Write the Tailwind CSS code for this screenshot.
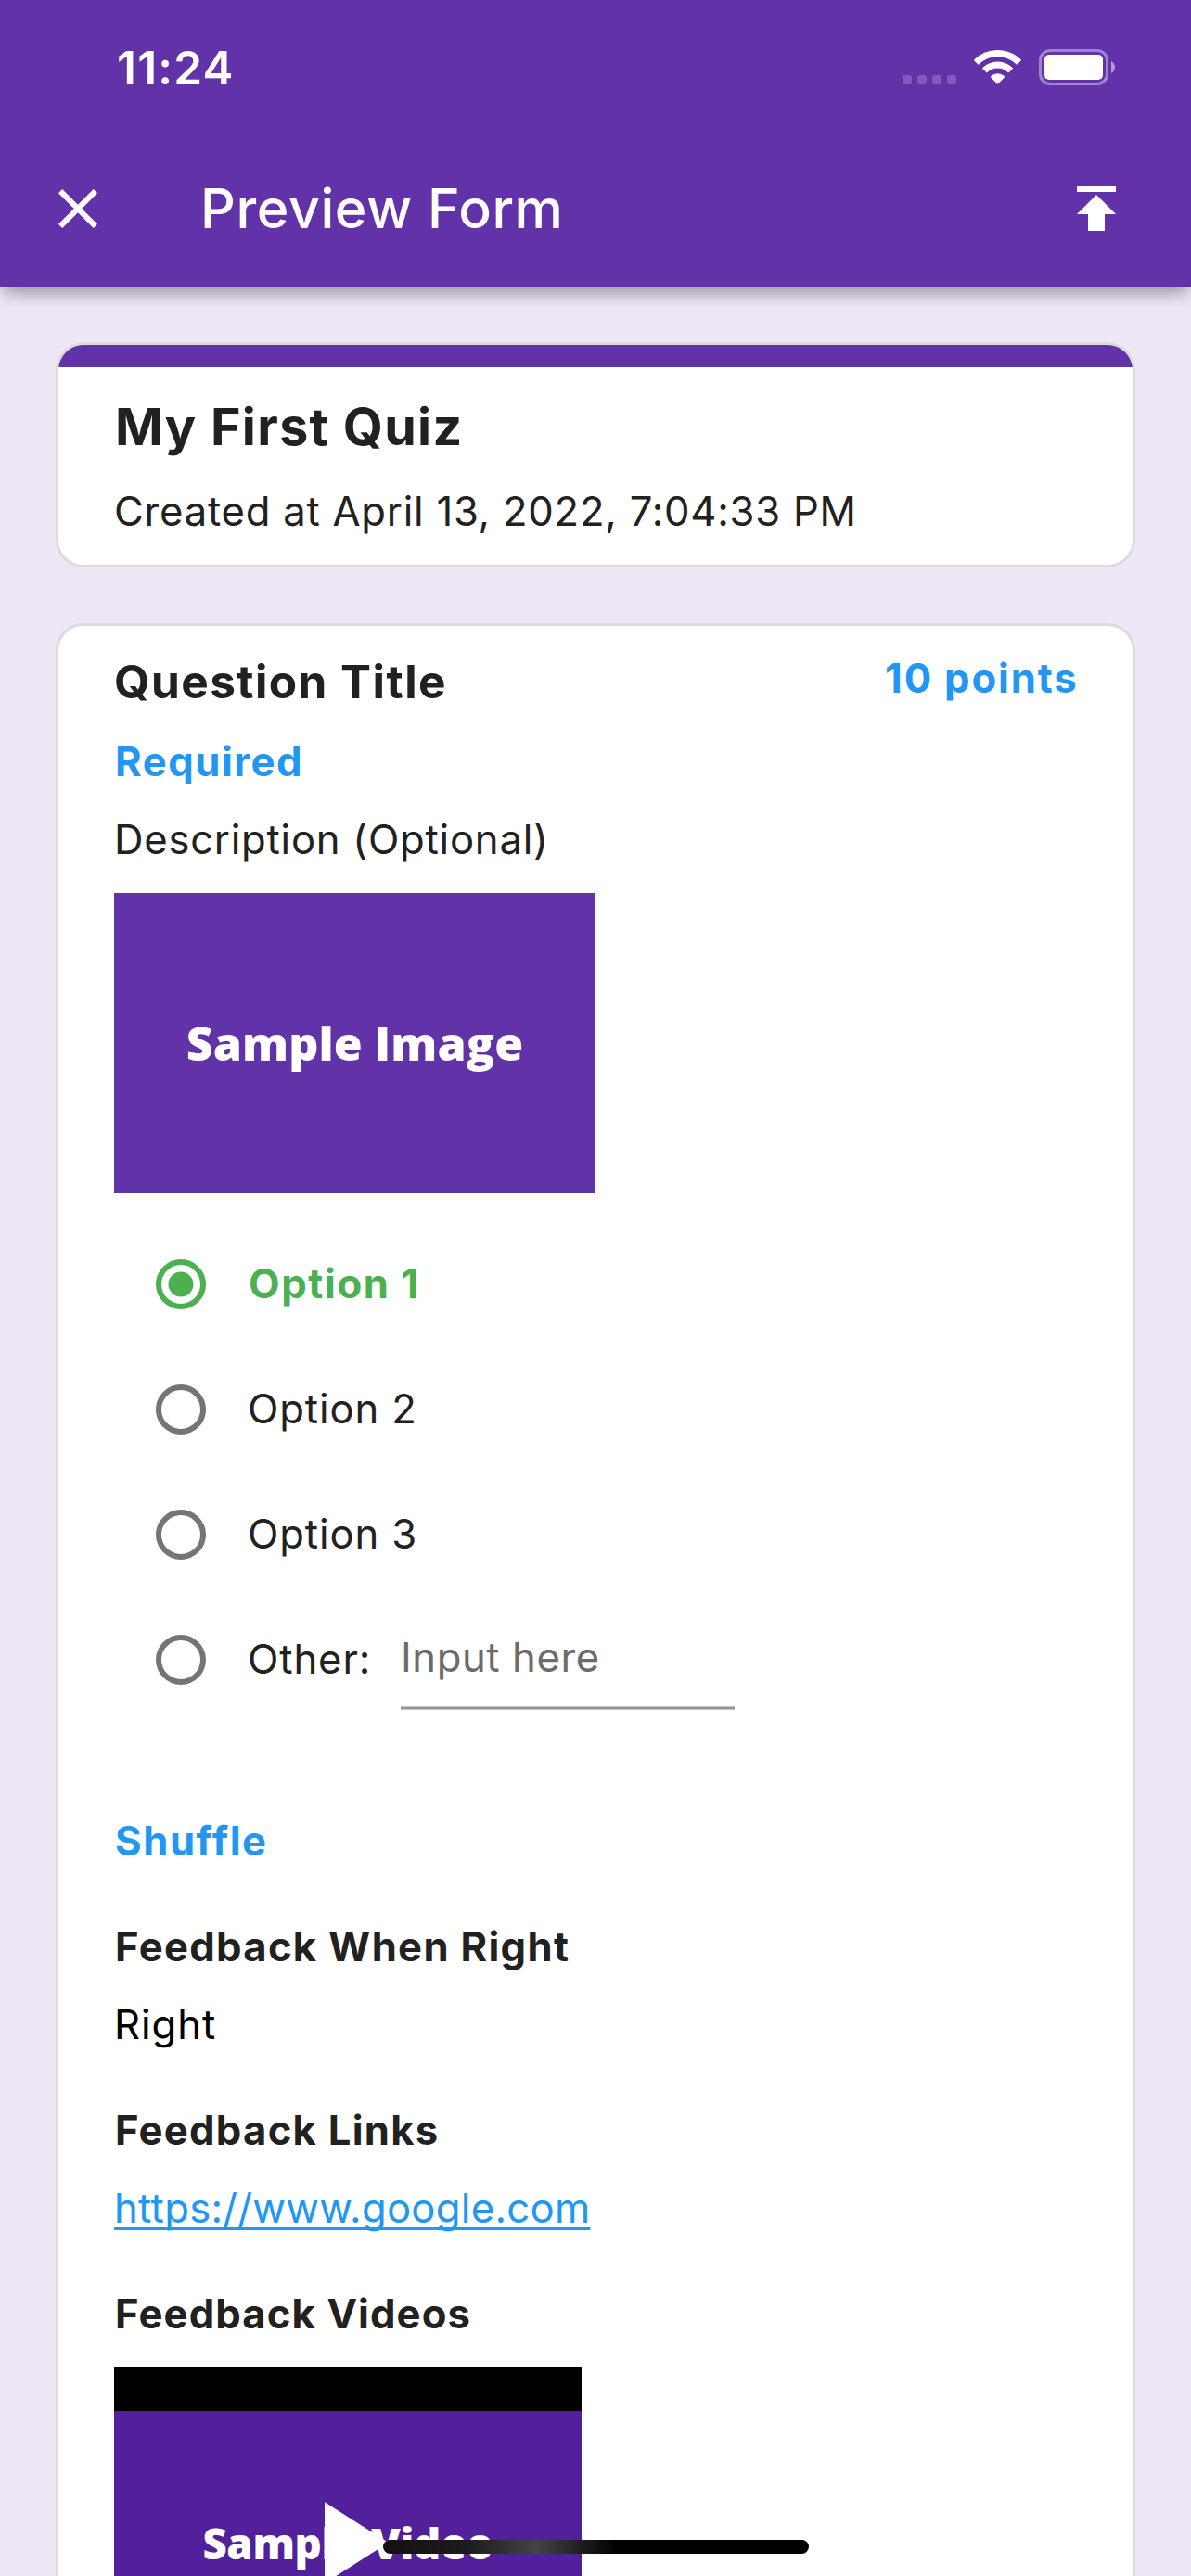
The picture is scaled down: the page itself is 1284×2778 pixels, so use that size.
<!DOCTYPE html>
<html lang="en">
<head>
<meta charset="utf-8">
<title>Preview Form</title>
<script src="https://cdn.jsdelivr.net/npm/@tailwindcss/browser@4"></script>
</head>
<body class="relative h-[2778px] w-[1284px] overflow-hidden bg-[#eee8f6] font-['Inter',sans-serif] text-[#212121]">
  <div class="flex h-full flex-col overflow-hidden">
    <header class="relative z-10 h-[309px] shrink-0 bg-[#6233a8] text-white shadow-[0_9px_18px_-3px_rgba(0,0,0,0.4)]">
      <!-- status bar -->
      <div class="flex h-[141px] items-start justify-between pl-[126px] pr-[82px]">
        <div class="mt-[43px] text-[49.5px] leading-[60px] font-semibold tracking-[1.2px]">11:24</div>
        <div class="mt-[53px] flex items-start">
          <div class="mt-[28px] flex gap-[6px]">
            <span class="h-[10px] w-[10px] rounded-[3px] bg-white/20"></span>
            <span class="h-[10px] w-[10px] rounded-[3px] bg-white/20"></span>
            <span class="h-[10px] w-[10px] rounded-[3px] bg-white/20"></span>
            <span class="h-[10px] w-[10px] rounded-[3px] bg-white/20"></span>
          </div>
          <svg class="ml-[19px] mt-[1px] h-[37px] w-[51px]" viewBox="0 0 51 37" fill="white">
            <path d="M25.5 0C35 0 44 3.7 50.600 10.200Q51.200 10.900 50.600 11.500L46.900 15.200Q46.200 15.800 45.500 15.200A28.700 28.700 0 0 0 5.500 15.200Q4.800 15.800 4.100 15.200L.4 11.500Q-.2 10.900 .4 10.200A35.800 35.800 0 0 1 25.500 0Z"/>
            <path d="M25.500 12.500A23.200 23.200 0 0 1 41.600 19Q42.200 19.700 41.600 20.300L37.800 24Q37.100 24.600 36.500 24A16 16 0 0 0 14.500 24Q13.900 24.600 13.200 24L9.400 20.300Q8.800 19.700 9.400 19A23.200 23.200 0 0 1 25.500 12.500Z"/>
            <path d="M25.500 25.200A10.800 10.800 0 0 1 32.800 28.100Q33.400 28.800 32.800 29.400L26.200 36.200Q25.500 36.900 24.800 36.200L18.200 29.400Q17.600 28.800 18.200 28.100A10.800 10.800 0 0 1 25.500 25.200Z"/>
          </svg>
          <svg class="ml-[19px] h-[39px] w-[82px]" viewBox="0 0 82 39">
            <rect x="1.500" y="1.500" width="72" height="36" rx="10.500" fill="none" stroke="white" stroke-opacity=".4" stroke-width="3"/>
            <rect x="6" y="6" width="63" height="27" rx="5" fill="white"/>
            <path d="M78 13Q82 15.500 82 19.500T78 26Z" fill="white" fill-opacity=".5"/>
          </svg>
        </div>
      </div>
      <!-- app bar -->
      <div class="flex h-[168px] items-center pl-12 pr-[66px]">
        <svg class="h-[72px] w-[72px]" viewBox="0 0 24 24" fill="white"><path d="M19 6.410L17.590 5 12 10.590 6.410 5 5 6.410 10.590 12 5 17.590 6.410 19 12 13.410 17.590 19 19 17.590 13.410 12z"/></svg>
        <h1 class="ml-[96px] grow text-[59px] leading-[72px] font-medium tracking-[0.6px]">Preview Form</h1>
        <svg class="h-[72px] w-[72px]" viewBox="0 0 24 24" fill="white"><path d="M5 4v2h14V4H5zm0 10h4v6h6v-6h4l-7-7-7 7z"/></svg>
      </div>
    </header>

    <main class="flex min-h-0 grow flex-col gap-[60px] overflow-hidden px-[60px] pt-[60px]">
      <section class="h-[243px] shrink-0 overflow-hidden rounded-[30px] border-[3px] border-[#dcdcdc] bg-white">
        <div class="h-6 bg-[#6233a8]"></div>
        <div class="px-[60px] pt-[31px]">
          <h2 class="pl-px text-[55.5px] leading-[66px] font-bold tracking-[1.35px]">My First Quiz</h2>
          <p class="mt-[31px] text-[43.6px] leading-[56px] tracking-[0.77px]">Created at April 13, 2022, 7:04:33 PM</p>
        </div>
      </section>

      <section class="h-[2300px] shrink-0 rounded-[30px] border-[3px] border-[#dcdcdc] bg-white px-[60px] pt-[30px] text-[43.6px] leading-[56px]">
        <div class="flex h-[60px] items-start justify-between whitespace-nowrap">
          <h3 class="text-[49.5px] leading-[60px] font-bold tracking-[1.46px]">Question Title</h3>
          <span class="-mt-px w-[207px] font-bold tracking-[1.85px] text-[#2196f3]">10 points</span>
        </div>
        <p class="mt-[29px] pl-px font-bold tracking-[1.55px] text-[#2196f3]">Required</p>
        <p class="mt-[28px] tracking-[0.77px]">Description (Optional)</p>

        <div class="mt-[29px] flex h-[324px] w-[519px] items-center justify-center bg-[#6233a8] font-['Open_Sans',sans-serif] text-[50px] leading-[68px] font-extrabold tracking-[0.12px] text-white">Sample Image</div>

        <ul class="mt-[30px] tracking-[0.9px]">
          <li class="flex h-[135px] items-center pl-[45px]">
            <svg class="h-[54px] w-[54px]" viewBox="0 0 54 54"><circle cx="27" cy="27" r="24" fill="none" stroke="#4caf50" stroke-width="6"/><circle cx="27" cy="27" r="13.500" fill="#4caf50"/></svg>
            <span class="ml-[46px] font-bold tracking-[1.65px] text-[#4caf50]">Option 1</span>
          </li>
          <li class="flex h-[135px] items-center pl-[45px]">
            <svg class="h-[54px] w-[54px]" viewBox="0 0 54 54"><circle cx="27" cy="27" r="24" fill="none" stroke="#757575" stroke-width="6"/></svg>
            <span class="ml-[45px]">Option 2</span>
          </li>
          <li class="flex h-[135px] items-center pl-[45px]">
            <svg class="h-[54px] w-[54px]" viewBox="0 0 54 54"><circle cx="27" cy="27" r="24" fill="none" stroke="#757575" stroke-width="6"/></svg>
            <span class="ml-[45px]">Option 3</span>
          </li>
          <li class="flex h-[135px] items-center pl-[45px]">
            <svg class="h-[54px] w-[54px]" viewBox="0 0 54 54"><circle cx="27" cy="27" r="24" fill="none" stroke="#757575" stroke-width="6"/></svg>
            <span class="ml-[45px] w-[165px]">Other:</span>
            <div class="mt-[38px] w-[360px] self-start">
              <span class="block tracking-[0.6px] text-[#6b6b6b]">Input here</span>
              <div class="mt-[24px] h-1 border-y border-[#c4c4c4] bg-[#949494]"></div>
            </div>
          </li>
        </ul>

        <p class="mt-[101px] pl-px font-bold tracking-[1.6px] text-[#2196f3]">Shuffle</p>

        <h4 class="mt-[58px] pl-px font-bold tracking-[1.32px]">Feedback When Right</h4>
        <p class="mt-[28px] tracking-[0.97px] text-black">Right</p>

        <h4 class="mt-[58px] pl-px font-bold tracking-[1.28px]">Feedback Links</h4>
        <p class="mt-[28px] tracking-[0.3px]"><a class="text-[#2196f3] underline decoration-[3px] underline-offset-[5px] [text-decoration-skip-ink:none]">https://www.google.com</a></p>

        <h4 class="mt-[58px] pl-px font-bold tracking-[1.13px]">Feedback Videos</h4>
        <div class="relative mt-[29px] flex h-[378px] w-[504px] flex-col bg-black py-[47px]">
          <div class="flex grow items-center justify-center bg-[#52209b] font-['Open_Sans',sans-serif] text-[45.5px] leading-[60px] font-extrabold tracking-[-0.3px] text-white">Sample Video</div>
          <svg class="absolute left-[177px] top-[113.500px] h-[150px] w-[150px]" viewBox="0 0 24 24" fill="white"><path d="M8 5v14l11-7z"/></svg>
        </div>
      </section>
    </main>
  </div>
  <!-- home indicator -->
  <div class="absolute bottom-6 left-[413px] z-20 h-[15px] w-[459px] rounded-full bg-linear-[90deg,#111_0%,#1c1c1c_20%,#444_36%,#000_55%]"></div>
</body>
</html>
